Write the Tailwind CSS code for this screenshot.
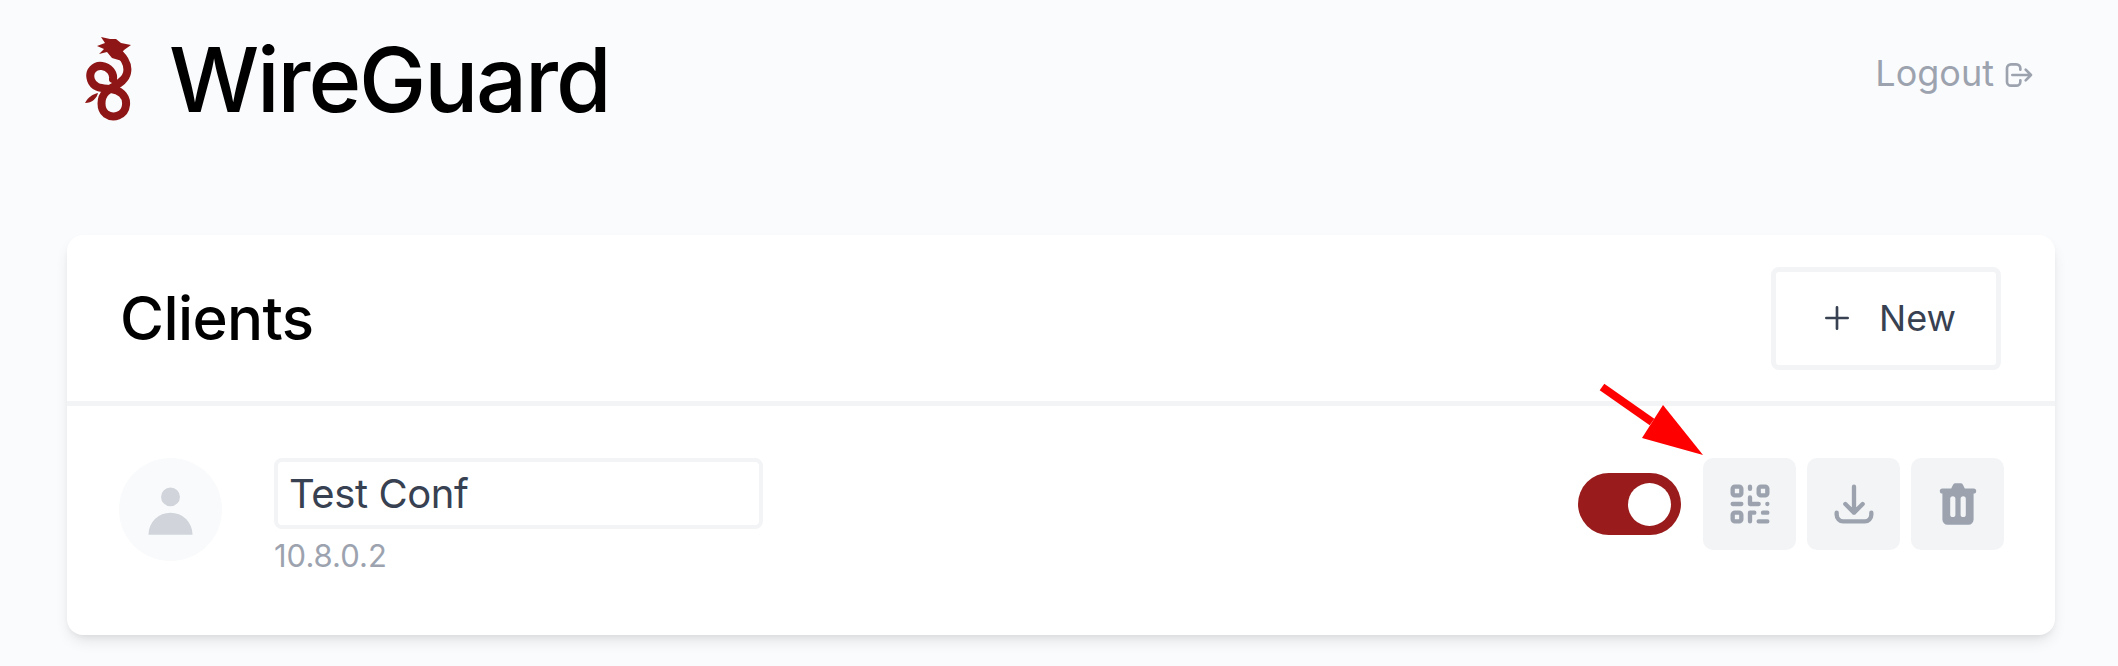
<!DOCTYPE html>
<html lang="en">
<head>
    <meta charset="UTF-8">
    <meta name="viewport" content="width=device-width, initial-scale=1.0">
    <title>WireGuard</title>
    <script src="https://cdn.jsdelivr.net/npm/@tailwindcss/browser@4"></script>
</head>
<body class="bg-[#fafbfd] font-['Inter',sans-serif] relative h-[666px] overflow-hidden">
    <div class="pl-[67px] pr-[63px]">
        <!-- header -->
        <div class="flex justify-between h-[235px]">
            <div class="flex items-start pl-[18px] pt-[37px]">
                <svg class="w-[47px] h-[84px]" viewBox="0 0 47 84" fill="none" stroke="#8f1616" stroke-linecap="round">
                    <path d="M29 13 C38 18 44 27 42 36 C40 46 27 49 21 55 C15 61 15 72 21 77 C28 82 40 79 41 68 C42 58 34 53 26 52 C18 51 9 52 6 43 C3 34 10 28 17 29 C24 30 29 36 28 42" stroke-width="8"/>
                    <path d="M16 0 L25 2 L31 2 L36 6 L46 8 L39 13 L36 17 L37 24 L27 21 L22 15 L14 17 L19 12 L12 9 L20 6 Z" fill="#8f1616" stroke="none"/>
                    <path d="M0 66 C3 60 8 57 13 56 C12 61 7 66 0 66 Z" fill="#8f1616" stroke="none"/>
                </svg>
                <h1 class="ml-[37px] -mt-[13px] text-[90px] leading-[112px] font-medium tracking-[-2.2px] text-black">WireGuard</h1>
            </div>
            <div class="flex items-center gap-[9px] h-[36px] mt-[55px] pr-[20px] text-[36px] text-[#9ca3af]">
                <span>Logout</span>
                <svg class="w-[32px] h-[32px] mt-[3px]" viewBox="0 0 24 24" fill="none" stroke="currentColor" stroke-width="2" stroke-linecap="round" stroke-linejoin="round">
                    <path d="M17 16l4-4m0 0l-4-4m4 4H7m6 4v1a3 3 0 01-3 3H6a3 3 0 01-3-3V7a3 3 0 013-3h4a3 3 0 013 3v1"/>
                </svg>
            </div>
        </div>

        <!-- clients card -->
        <div class="bg-white rounded-[16px] shadow-[0_8px_16px_-4px_rgba(0,0,0,0.12),0_3px_6px_-2px_rgba(0,0,0,0.06)] h-[400px]">
            <div class="flex items-center justify-between h-[171px] pl-[53px] pr-[54px] border-b-[5px] border-[#f3f4f6]">
                <h2 class="text-[60px] font-medium tracking-[-0.6px] text-black">Clients</h2>
                <div class="flex items-center justify-center gap-[26px] w-[230px] h-[103px] pl-[5px] rounded-[8px] border-[5px] border-[#f3f4f6] text-[36px] text-[#374151]">
                    <svg class="w-[32px] h-[32px]" viewBox="0 0 24 24" fill="none" stroke="currentColor" stroke-width="2" stroke-linecap="round" stroke-linejoin="round">
                        <path d="M12 4v16m8-8H4"/>
                    </svg>
                    <span>New</span>
                </div>
            </div>
            <div class="flex justify-between pt-[52px] pl-[52px] pr-[51px]">
                <div class="flex gap-[52px]">
                    <div class="flex items-center justify-center w-[103px] h-[103px] rounded-full bg-[#f9fafb] text-[#d1d5db]">
                        <svg class="w-[63px] h-[63px]" viewBox="0 0 20 20" fill="currentColor">
                            <path d="M10 9a3 3 0 100-6 3 3 0 000 6zm-7 9a7 7 0 1114 0H3z"/>
                        </svg>
                    </div>
                    <div>
                        <div class="w-[489px] h-[71px] pl-[11px] leading-[63px] rounded-[8px] border-[4px] border-[#f3f4f6] text-[40px] tracking-[-0.4px] text-[#374151]">Test Conf</div>
                        <div class="mt-[9px] text-[31px] leading-[36px] text-[#9ca3af]">10.8.0.2</div>
                    </div>
                </div>
                <div class="flex items-start gap-[11px]">
                    <div class="flex items-center justify-end w-[103px] h-[62px] mt-[15px] mr-[11px] pr-[10px] rounded-full bg-[#991b1b]">
                        <div class="w-[43px] h-[43px] rounded-full bg-white"></div>
                    </div>
                    <div class="flex items-center justify-center w-[93px] h-[92px] rounded-[10px] bg-[#f3f4f6] text-[#9ca3af]">
                        <svg class="w-[52px] h-[52px]" viewBox="0 0 24 24" fill="none" stroke="currentColor" stroke-width="2" stroke-linecap="round" stroke-linejoin="round">
                            <path d="M12 4v1m6 11h2m-6 0h-2v4m0-11v3m0 0h.01M12 12h4.01M16 20h4M4 12h4m12 0h.01M5 8h2a1 1 0 001-1V5a1 1 0 00-1-1H5a1 1 0 00-1 1v2a1 1 0 001 1zm12 0h2a1 1 0 001-1V5a1 1 0 00-1-1h-2a1 1 0 00-1 1v2a1 1 0 001 1zM5 20h2a1 1 0 001-1v-2a1 1 0 00-1-1H5a1 1 0 00-1 1v2a1 1 0 001 1z"/>
                        </svg>
                    </div>
                    <div class="flex items-center justify-center w-[93px] h-[92px] rounded-[10px] bg-[#f3f4f6] text-[#9ca3af]">
                        <svg class="w-[52px] h-[52px]" viewBox="0 0 24 24" fill="none" stroke="currentColor" stroke-width="2" stroke-linecap="round" stroke-linejoin="round">
                            <path d="M4 16v1a3 3 0 003 3h10a3 3 0 003-3v-1m-4-4l-4 4m0 0l-4-4m4 4V4"/>
                        </svg>
                    </div>
                    <div class="flex items-center justify-center w-[93px] h-[92px] rounded-[10px] bg-[#f3f4f6] text-[#9ca3af]">
                        <svg class="w-[52px] h-[52px]" viewBox="0 0 20 20" fill="currentColor">
                            <path fill-rule="evenodd" clip-rule="evenodd" d="M9 2a1 1 0 00-.894.553L7.382 4H4a1 1 0 000 2v10a2 2 0 002 2h8a2 2 0 002-2V6a1 1 0 100-2h-3.382l-.724-1.447A1 1 0 0011 2H9zM7 8a1 1 0 012 0v6a1 1 0 11-2 0V8zm5-1a1 1 0 00-1 1v6a1 1 0 102 0V8a1 1 0 00-1-1z"/>
                        </svg>
                    </div>
                </div>
            </div>
        </div>
    </div>

    <!-- annotation arrow over the page -->
    <svg class="absolute left-[1590px] top-[375px] w-[125px] h-[90px]" viewBox="0 0 125 90" fill="#ff0000">
        <path d="M12 12 L62 47" stroke="#ff0000" stroke-width="8" stroke-linecap="butt"/>
        <path d="M113 80 L73 30 L52 63 Z"/>
    </svg>
</body>
</html>
